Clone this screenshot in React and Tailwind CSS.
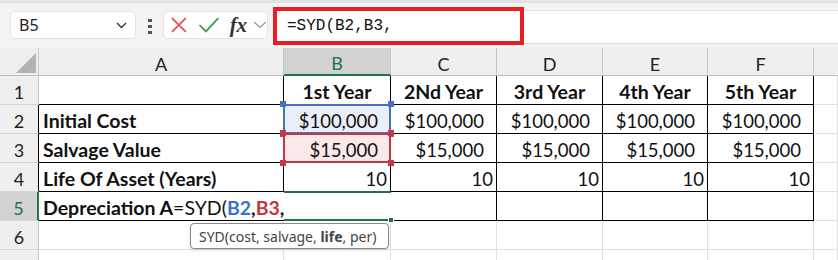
import React from "react";

const cellFont = { fontFamily: "Lato, 'Liberation Sans', sans-serif" };

function Corner() {
  return (
    <div className="relative bg-[#efefef] border-r border-r-[#c8c8c8] border-b border-b-[#bdbdbd]">
      <svg width="39" height="28" className="block">
        <polygon points="36,5 36,25 16,25" fill="#b3b3b3" />
      </svg>
    </div>
  );
}

function ColHead({ label, active }) {
  return active ? (
    <div className="flex items-end justify-center leading-[22px] bg-[#d2d2d2] text-[#217346] border-r border-r-[#c8c8c8] border-b-2 border-b-[#217346] text-[18px]">
      {label}
    </div>
  ) : (
    <div className="flex items-end justify-center leading-[22px] bg-[#efefef] text-[#222] border-r border-r-[#c8c8c8] border-b border-b-[#bdbdbd] text-[18px]">
      {label}
    </div>
  );
}

function RowHead({ n, edge }) {
  if (edge === "active")
    return (
      <div className="flex items-end justify-center pb-[1px] leading-[22px] bg-[#d2d2d2] text-[#217346] border-r-2 border-r-[#217346] border-b border-b-[#d4d4d4] text-[18px]">
        {n}
      </div>
    );
  if (edge === "black")
    return (
      <div className="flex items-end justify-center pb-[1px] leading-[22px] bg-[#efefef] text-[#222] border-r border-r-black border-b border-b-[#d4d4d4] text-[18px]">
        {n}
      </div>
    );
  return (
    <div className="flex items-end justify-center pb-[1px] leading-[22px] bg-[#efefef] text-[#222] border-r border-r-[#c8c8c8] border-b border-b-[#d4d4d4] text-[18px]">
      {n}
    </div>
  );
}

function Cell({ children, className = "" }) {
  return (
    <div className={"flex items-end pb-[1px] leading-[22px] whitespace-nowrap border-r border-r-black border-b border-b-black text-[18.5px] text-[#111] " + className}>
      {children}
    </div>
  );
}

function Grid({ className = "" }) {
  return <div className={"border-r border-r-[#e1e1e1] border-b border-b-[#e1e1e1] " + className} />;
}

function Handle({ className }) {
  return <div className={"absolute w-[6px] h-[6px] " + className} />;
}

export default function App() {
  const years = ["1st Year", "2Nd Year", "3rd Year", "4th Year", "5th Year"];
  return (
    <div className="relative w-[838px] h-[260px] overflow-hidden bg-white">
      {/* formula bar */}
      <div
        className="h-[48px] bg-[#f3f3f3] border-t-[3px] border-t-[#e2e2e2] flex items-start"
        style={{ fontFamily: "'Noto Sans', 'Open Sans', sans-serif" }}
      >
        <div className="ml-[10px] mt-[8px] w-[126px] h-[28px] bg-white border border-[#e3e3e3] rounded-[5px] flex items-center justify-between pl-[8px] pr-[8px]">
          <span className="text-[16px] text-[#222]">B5</span>
          <svg width="11" height="7" viewBox="0 0 11 7">
            <path d="M1 1 L5.5 5.5 L10 1" fill="none" stroke="#333" strokeWidth="1.4" />
          </svg>
        </div>
        <div className="ml-[12px] mt-[16px] w-[4px] flex flex-col gap-[3px]">
          <div className="w-[4px] h-[3px] bg-[#555]" />
          <div className="w-[4px] h-[3px] bg-[#555]" />
          <div className="w-[4px] h-[3px] bg-[#555]" />
        </div>
        <div className="ml-[11px] mt-[8px] w-[105px] h-[28px] bg-white border border-[#e3e3e3] rounded-[5px] flex items-center pl-[6px]">
          <svg width="18" height="18" viewBox="0 0 18 18">
            <path d="M2 2 L16 16 M16 2 L2 16" stroke="#e8474c" strokeWidth="1.6" fill="none" />
          </svg>
          <svg className="ml-[10px]" width="22" height="18" viewBox="0 0 22 18">
            <path d="M1.5 9 L8 15.5 L20.5 2" stroke="#3a9a4a" strokeWidth="1.7" fill="none" />
          </svg>
          <span
            className="ml-[10px] text-[21px] italic font-bold text-[#333] leading-none"
            style={{ fontFamily: "'Liberation Serif', 'DejaVu Serif', serif" }}
          >
            fx
          </span>
          <svg className="ml-[6px]" width="14" height="8" viewBox="0 0 14 8">
            <path d="M1 1 L7 6.5 L13 1" fill="none" stroke="#9a9a9a" strokeWidth="1.3" />
          </svg>
        </div>
        <div className="ml-[5px] mt-[4px] w-[251px] h-[38px] border-[4px] border-[#ec1c24] bg-white flex items-center pl-[10px]">
          <span
            className="text-[16px] text-[#111]"
            style={{ fontFamily: "'Liberation Mono', 'DejaVu Sans Mono', monospace" }}
          >
            =SYD(B2,B3,
          </span>
        </div>
        <div className="flex-1 mt-[7px] h-[34px] bg-white border-t border-b border-[#e1e1e1]" />
      </div>

      {/* sheet */}
      <div
        className="grid grid-cols-[39px_245px_107px_106px_106px_105px_106px_1fr] grid-rows-[28px_29px_29px_29px_29px_29px_29px_29px]"
        style={cellFont}
      >
        <Corner />
        <ColHead label="A" />
        <ColHead label="B" active />
        <ColHead label="C" />
        <ColHead label="D" />
        <ColHead label="E" />
        <ColHead label="F" />
        <div className="bg-[#efefef] border-b border-b-[#bdbdbd]" />

        {/* row 1 */}
        <RowHead n="1" />
        <Cell />
        {years.map((y) => (
          <Cell key={y} className="justify-center font-bold text-[19.5px]">
            {y}
          </Cell>
        ))}
        <Grid />

        {/* row 2 */}
        <RowHead n="2" edge="black" />
        <Cell className="pl-[4px] font-bold text-[19.5px]">Initial Cost</Cell>
        <Cell className="relative justify-end pr-[12px] bg-[#e9eef7]">
          $100,000
          <div className="absolute -left-[1px] -top-[1px] w-[108px] h-[30px] border-2 border-[#4472c4]" />
          <Handle className="-left-[4px] -top-[4px] bg-[#4472c4]" />
          <Handle className="-right-[4px] -top-[4px] bg-[#4472c4]" />
          <Handle className="-left-[4px] -bottom-[4px] bg-[#4472c4]" />
          <Handle className="-right-[4px] -bottom-[4px] bg-[#4472c4]" />
        </Cell>
        {[0, 1, 2, 3].map((i) => (
          <Cell key={i} className="justify-end pr-[12px]">
            $100,000
          </Cell>
        ))}
        <Grid />

        {/* row 3 */}
        <RowHead n="3" edge="black" />
        <Cell className="pl-[4px] font-bold text-[19.5px]">Salvage Value</Cell>
        <Cell className="relative justify-end pr-[12px] bg-[#fbe9ea]">
          $15,000
          <div className="absolute -left-[1px] -top-[1px] w-[108px] h-[30px] border-2 border-[#c8373f]" />
          <Handle className="-left-[4px] -top-[4px] bg-[#c8373f]" />
          <Handle className="-right-[4px] -top-[4px] bg-[#c8373f]" />
          <Handle className="-left-[4px] -bottom-[4px] bg-[#c8373f]" />
          <Handle className="-right-[4px] -bottom-[4px] bg-[#c8373f]" />
        </Cell>
        {[0, 1, 2, 3].map((i) => (
          <Cell key={i} className="justify-end pr-[12px]">
            $15,000
          </Cell>
        ))}
        <Grid />

        {/* row 4 */}
        <RowHead n="4" edge="black" />
        <Cell className="pl-[4px] font-bold text-[19.5px]">Life Of Asset (Years)</Cell>
        {[0, 1, 2, 3, 4].map((i) => (
          <Cell key={i} className="justify-end pr-[3px]">
            10
          </Cell>
        ))}
        <Grid />

        {/* row 5 */}
        <RowHead n="5" edge="active" />
        <div className="relative z-10 flex items-end pb-[1px] leading-[22px] whitespace-nowrap border-b border-b-black pl-[4px] text-[19.5px] text-[#111]">
          <span className="font-bold">Depreciation A</span>
          <span>=SYD(</span>
          <span className="font-bold text-[#3b74cc]">B2</span>
          <span className="font-bold">,</span>
          <span className="font-bold text-[#c8373f]">B3</span>
          <span className="font-bold">,</span>
          <span className="ml-[3px] mb-[-1px] w-[1px] h-[27px] bg-black" />
        </div>
        <div className="relative border-t-2 border-t-[#217346] border-b-2 border-b-[#217346] -mt-[1px]">
          <div className="absolute -right-[3px] -bottom-[4px] w-[6px] h-[6px] bg-[#217346] border border-white" />
        </div>
        <Cell />
        <Cell />
        <Cell />
        <Cell />
        <Grid />

        {/* rows 6, 7 */}
        <RowHead n="6" />
        <Grid />
        <Grid />
        <Grid />
        <Grid />
        <Grid />
        <Grid />
        <Grid />
        <RowHead n="7" />
        <Grid />
        <Grid />
        <Grid />
        <Grid />
        <Grid />
        <Grid />
        <Grid />
      </div>

      {/* function tooltip */}
      <div
        className="absolute left-[190px] top-[223px] w-[199px] h-[26px] bg-white border border-[#8a8a8a] rounded-[4px] shadow-[0_1px_3px_rgba(0,0,0,0.15)] flex items-center pl-[8px] text-[14px] text-[#444] whitespace-nowrap"
        style={{ fontFamily: "'Noto Sans', 'Open Sans', sans-serif" }}
      >
        SYD(cost, salvage,&nbsp;<span className="font-bold">life</span>, per)
      </div>
    </div>
  );
}
